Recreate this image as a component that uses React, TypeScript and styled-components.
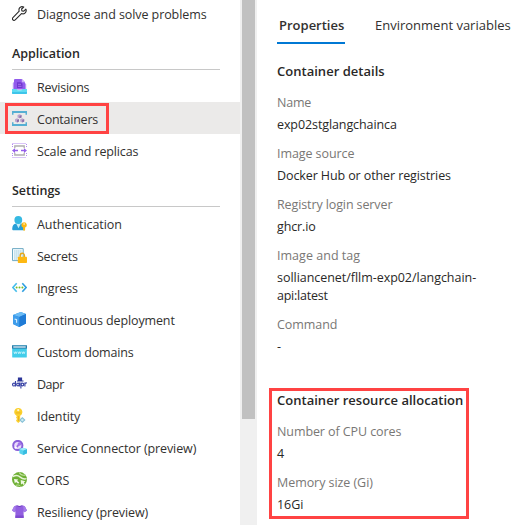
import React from "react";
import styled, { createGlobalStyle } from "styled-components";

const GlobalStyle = createGlobalStyle`
  *, *::before, *::after { box-sizing: border-box; }
  body {
    margin: 0;
    background: #fff;
    color: #323130;
    font-family: "Open Sans", "Noto Sans", sans-serif;
    font-size: 12.5px;
    overflow: hidden;
  }
`;

const Page = styled.div`
  display: flex;
  width: 524px;
  height: 525px;
  overflow: hidden;
`;

const Sidebar = styled.nav`
  flex: 0 0 240px;
  display: flex;
  flex-direction: column;
  margin-top: -3px;
`;

const GroupTitle = styled.h2<{ $track?: number }>`
  flex: none;
  height: 41px;
  margin: 0 20px 0 12px;
  padding-top: 15px;
  border-bottom: 1px solid #c8c8c8;
  font-size: 12.5px;
  line-height: 20px;
  font-weight: 600;
  color: #292827;
  letter-spacing: ${(p) => p.$track ?? 0}px;
`;

const NavItem = styled.a<{ $selected?: boolean }>`
  position: relative;
  flex: none;
  display: flex;
  align-items: center;
  gap: 10px;
  height: 32px;
  padding: 1px 0 0 12px;
  background: ${(p) => (p.$selected ? "#ebeae9" : "transparent")};

  svg {
    flex: none;
    width: 15px;
    height: 15px;
  }
`;

const Label = styled.span<{ $track: number }>`
  line-height: 18px;
  padding-top: 2px;
  white-space: nowrap;
  letter-spacing: ${(p) => p.$track}px;
`;

const NavHighlight = styled.span`
  position: absolute;
  left: 5px;
  top: 1px;
  width: 104px;
  height: 31px;
  border: 3px solid #ff4343;
`;

const ScrollTrack = styled.div`
  flex: 0 0 17px;
  padding: 0 2px;
  background: #f0f0f0;
`;

const ScrollThumb = styled.div`
  height: 419px;
  background: #c1c1c1;
`;

const Content = styled.main`
  flex: 1;
  min-width: 0;
  padding-left: 20px;
`;

const Tabs = styled.div`
  display: flex;
  gap: 28px;
  height: 44px;
`;

const Tab = styled.div<{ $active?: boolean }>`
  height: 44px;
  padding: 16px 2px 0;
  width: ${(p) => (p.$active ? "68px" : "auto")};
  border-bottom: 2px solid ${(p) => (p.$active ? "#0078d4" : "transparent")};
  font-size: 13px;
  line-height: 18px;
  font-weight: ${(p) => (p.$active ? 600 : 400)};
  letter-spacing: 0;
  white-space: nowrap;
`;

const Section = styled.section<{ $gap: number }>`
  position: relative;
  margin-top: ${(p) => p.$gap}px;
`;

const SectionTitle = styled.h3`
  margin: 0 0 12px;
  font-size: 13px;
  line-height: 22px;
  font-weight: 600;
  color: #292827;
  letter-spacing: 0.02px;
`;

const Fields = styled.dl`
  display: flex;
  flex-direction: column;
  gap: 11px;
  margin: 0;
`;

const Field = styled.div`
  display: flex;
  flex-direction: column;
  gap: 4px;
`;

const Term = styled.dt<{ $track: number }>`
  line-height: 18px;
  color: #797775;
  letter-spacing: ${(p) => p.$track}px;
`;

const Value = styled.dd`
  margin: 0;
  line-height: 18px;
  color: #292827;
`;

const Line = styled.span<{ $track: number }>`
  display: block;
  white-space: nowrap;
  letter-spacing: ${(p) => p.$track}px;
`;

const SectionHighlight = styled.span`
  position: absolute;
  left: -8px;
  top: -1px;
  width: 200px;
  height: 131px;
  border: 3px solid #ff4343;
`;

const Svg = ({ children }: { children: React.ReactNode }) => (
  <svg viewBox="0 0 15 15" fill="none">{children}</svg>
);

const Wrench = () => (
  <Svg>
    <path d="M13.9 3.1 11.8 5.2 9.9 4.9 9.6 3 11.7 1C10.2.3 8.500.7 7.600 1.900 6.900 2.900 6.800 4.100 7.200 5.200L.9 11.600C.3 12.200.3 13.300.9 13.900 1.500 14.500 2.500 14.500 3.200 13.900L9.500 7.600C10.700 8.100 12.200 7.800 13.200 6.800 14.200 5.800 14.400 4.300 13.900 3.100Z" stroke="#292929" strokeWidth="1.1" strokeLinejoin="round" />
  </Svg>
);

const RevisionsIcon = () => (
  <Svg>
    <path d="M.8 4 3 2v8H.8zM14.200 5v5h-2V3.500z" fill="#b796f5" />
    <path d="M3 0h6.800L13 3.200V10.500H3a1 1 0 0 1-1-1V1a1 1 0 0 1 1-1z" fill="#925cec" />
    <path d="M9.800 0 13 3.200H9.800z" fill="#cdb2fa" />
    <path d="M5 3.300h4l1.500 1.500V9H5z" fill="#7136d0" />
    <path d="M6 5.300h3M6 7.300h3.500" stroke="#a77af0" strokeWidth=".9" />
    <path d="M0 10h4.500l1 1.300h4l1-1.300H15v4a1 1 0 0 1-1 1H1a1 1 0 0 1-1-1z" fill="#5fdcf2" />
    <path d="M0 13h15v1a1 1 0 0 1-1 1H1a1 1 0 0 1-1-1z" fill="#3ec5ea" />
  </Svg>
);

const ContainersIcon = () => (
  <Svg>
    <path d="M0 0h15v3.800h-1.500V2H1.500v1.800H0zM0 15h15v-3.800h-1.500V13H1.500v-1.800H0z" fill="#56afd3" />
    <path d="M7.500 3.200 9.500 4.100v2.300L7.500 7.300 5.500 6.400V4.100zM5 7.300 7 8.200v2.300l-2 .9-2-.9V8.200zM10.200 7.300l2 .9v2.300l-2 .9-2-.9V8.200z" fill="#bba5cd" />
    <path d="M7.500 5 9.500 4.100v2.300L7.500 7.300zM5 9.100l2-.9v2.300l-2 .9zM10.200 9.100l2-.9v2.300l-2 .9z" fill="#8a6da9" />
  </Svg>
);

const ScaleIcon = () => (
  <Svg>
    <path d="M.5.500h14M.5 14.500h14" stroke="#b48af0" strokeDasharray="1 1" />
    <path d="M.5 1v4M14.500 1v4M.5 10v4M14.500 10v4" stroke="#b48af0" strokeDasharray="1 1" />
    <path d="M2.800 5.200V3h9.400v2.200M2.800 9.800V12h9.400V9.800" stroke="#b0aeb0" strokeWidth="1.300" />
    <path d="M0 7.500 3 5.200v1.600h3v1.500H3v1.600zM15 7.500l-3-2.300v1.600H9v1.500h3v1.600z" fill="#965fea" />
  </Svg>
);

const AuthIcon = () => (
  <Svg>
    <path d="M.2 13c0-3.500 1.500-5.600 4-5.600H9c2 0 3.200 2 3.500 5.600 0 .8-.5 1.300-1.300 1.300H1.500C.7 14.300.2 13.800.2 13z" fill="#279fd7" />
    <path d="M4 7.300h5l-2.500 4.900z" fill="#c5effb" />
    <circle cx="6.300" cy="4" r="3.900" fill="#36b9e2" />
    <path d="M12.100 6.300a2.700 2.700 0 0 1 1 5.200V14l-1 1-1-1v-2.500a2.700 2.700 0 0 1 1-5.200z" fill="#fdb813" />
    <circle cx="12.100" cy="8" r=".7" fill="#fff" />
  </Svg>
);

const SecretsIcon = () => (
  <Svg>
    <path d="M.5.600h10.700v12H.5z" fill="#f4fbfe" stroke="#6fabc4" />
    <path d="M2.200 3h8M2.200 5h8M2.200 7h8M2.200 9h5M2.200 11h3" stroke="#8dc0d6" strokeDasharray="1.300 .7" />
    <path d="M8.200 9V7.500a2.100 2.300 0 0 1 4.200 0V9" stroke="#e9a716" strokeWidth="1.400" />
    <rect x="5.800" y="8.700" width="9.200" height="6.300" rx=".8" fill="#fdb813" />
  </Svg>
);

const IngressIcon = () => (
  <Svg>
    <path d="M4.700 3.300.9 7.500l3.800 4.200" stroke="#45bdea" strokeWidth="1.600" />
    <path d="M10.300 3.300l3.800 4.200-3.800 4.200" stroke="#2e9fe0" strokeWidth="1.600" />
    <circle cx="4.600" cy="7.500" r="1" fill="#78bd27" />
    <circle cx="7.500" cy="7.500" r="1" fill="#78bd27" />
    <circle cx="10.400" cy="7.500" r="1" fill="#78bd27" />
  </Svg>
);

const DeployIcon = () => (
  <Svg>
    <path d="M8.800 0 14 2v9.600L7.200 15 1 12V3z" fill="#2289e3" />
    <path d="M1 3 8.800 0 14 2 7.200 5z" fill="#6cbcf5" />
    <path d="M7.200 5 14 2v9.600L7.200 15z" fill="#1f7bd6" />
    <path d="M1 3l6.200 2v10L1 12z" fill="#3f9deb" />
    <path d="M2.600 7 4.600 7.700v3" stroke="#d9f0ff" strokeWidth="1.100" />
  </Svg>
);

const DomainsIcon = () => (
  <Svg>
    <rect x=".2" y="1.500" width="14.600" height="12" rx=".6" fill="#42cdea" />
    <path d="M0 1.300h15v3.300H0z" fill="#2a7ba9" />
    <path d="M1.300 2.400h12.400v1.200H1.300z" fill="#eaf8fd" />
    <path d="m1.900 7.700.7 2 .8-2 .8 2 .7-2m1 0 .7 2 .8-2 .8 2 .7-2m1 0 .7 2 .8-2 .8 2 .7-2" stroke="#dffaff" strokeWidth=".7" />
  </Svg>
);

const DaprIcon = () => (
  <Svg>
    <path d="M5.900 1.500h4.200v3.300H5.900zM5 4.500h6.500v1.100H5z" fill="#2b3598" />
    <g stroke="#3a44a6" strokeWidth="1.150">
      <circle cx="2" cy="8.500" r="1.450" />
      <path d="M3.500 5v5.500" />
      <circle cx="6" cy="8.500" r="1.350" />
      <path d="M7.400 6.500v4M8.900 6.500v6" />
      <circle cx="10.400" cy="8.500" r="1.350" />
      <path d="M12.900 10.500V6.600M12.900 7.900c.3-.8 1-1.100 2-.9" />
    </g>
  </Svg>
);

const IdentityIcon = () => (
  <Svg>
    <path d="M6.200 0a4.100 4.100 0 0 1 2 7.700v5.500l-2 1.800-2-2v-1.100l1-1-1-1V9l.8-.8-.8-.6A4.100 4.100 0 0 1 6.200 0z" fill="#fbd02d" />
    <circle cx="6.200" cy="2.200" r="1.100" fill="#fff6ce" />
    <path d="M3.900 4.900h4.600M6.500 8v5" stroke="#eaae22" strokeWidth=".9" />
    <path d="m10.300 8.900 3.200 3.100-3.200 3-3.200-3z" fill="#84bfd6" />
    <path d="m10.300 10.400 1.700 1.600-1.700 1.500L8.600 12z" fill="#c9e9f1" />
  </Svg>
);

const ConnectorIcon = () => (
  <Svg>
    <circle cx="5.800" cy="5.500" r="4.600" fill="#e9dcfb" stroke="#8a60da" strokeWidth="2" />
    <path d="M4.300 7.300 7.300 4.200" stroke="#9c6ce6" strokeWidth="1.800" />
    <circle cx="7.400" cy="4" r="1.800" fill="#a374ea" />
    <circle cx="3.700" cy="7.500" r="1.200" fill="#fff" />
    <path d="m11.200 7.700 3.800 1.400v4.200L11.200 15l-3.800-1.700V9.100z" fill="#58d3ee" />
    <path d="m11.200 10.500 3.800-1.400v4.200L11.200 15z" fill="#38bce0" />
    <path d="m7.400 9.100 3.800-1.400L15 9.100l-3.800 1.400z" fill="#9debf8" />
  </Svg>
);

const CorsIcon = () => (
  <Svg>
    <circle cx="7.500" cy="7.500" r="7.500" fill="#6fb035" />
    <path d="M1 4.700c2.500-1.700 5.200-1.300 7.200.4 1.900 1.600 3.800 2.300 6.300 1.600" stroke="#e6f4d6" strokeWidth="1.400" />
    <path d="M7.300.600c1 2 3.200 3 5.700 2.500" stroke="#c3e2a2" strokeWidth="1.100" />
    <path d="m2 7 4.200.5-1 1.300 2 1.700-1 1.200-2.100-1.700-1.300 1.200z" fill="#f4faec" />
    <path d="m8.700 8 4.600 1.300-1.400 1.300 1 1.700-1.400.8-1-1.700-1.500 1z" fill="#eef8e2" />
    <path d="M4 13.300c1.700-.6 3.300-.3 4.500.9" stroke="#c3e2a2" />
  </Svg>
);

const ResiliencyIcon = () => (
  <Svg>
    <path d="M4.700 1.300c1.500 1 4.100 1 5.600 0l2.500 1L15 6.500l-2.500 1.700-.9-.9V14H3.400V7.300l-.9.900L0 6.500l2.200-4.200z" fill="#925fe0" />
    <path d="m2.200 2.300 1.500-.6-.3 5.600-.9.900L0 6.500zM12.800 2.300l-1.500-.6.300 5.600.9.900L15 6.500z" fill="#a67dea" />
    <path d="M4.700 1.300c1.500 1 4.100 1 5.600 0-.7 2-4.600 2.400-5.600 0z" fill="#6c3cbd" />
    <path d="M3.400 11.500h8.200V14H3.400z" fill="#7f4bd0" />
  </Svg>
);

type Entry = { text: string; track: number; Icon: React.FC; selected?: boolean };

const application: Entry[] = [
  { text: "Revisions", track: -0.23, Icon: RevisionsIcon },
  { text: "Containers", track: -0.24, Icon: ContainersIcon, selected: true },
  { text: "Scale and replicas", track: -0.13, Icon: ScaleIcon },
];

const settings: Entry[] = [
  { text: "Authentication", track: -0.06, Icon: AuthIcon },
  { text: "Secrets", track: -0.25, Icon: SecretsIcon },
  { text: "Ingress", track: -0.18, Icon: IngressIcon },
  { text: "Continuous deployment", track: -0.125, Icon: DeployIcon },
  { text: "Custom domains", track: -0.15, Icon: DomainsIcon },
  { text: "Dapr", track: -0.5, Icon: DaprIcon },
  { text: "Identity", track: -0.11, Icon: IdentityIcon },
  { text: "Service Connector (preview)", track: -0.1, Icon: ConnectorIcon },
  { text: "CORS", track: 0.05, Icon: CorsIcon },
  { text: "Resiliency (preview)", track: -0.13, Icon: ResiliencyIcon },
];

type Detail = { term: string; termTrack: number; lines: [string, number][] };

const details: Detail[] = [
  { term: "Name", termTrack: -0.2, lines: [["exp02stglangchainca", -0.095]] },
  { term: "Image source", termTrack: -0.08, lines: [["Docker Hub or other registries", -0.1]] },
  { term: "Registry login server", termTrack: -0.11, lines: [["ghcr.io", -0.12]] },
  { term: "Image and tag", termTrack: 0.03, lines: [["solliancenet/fllm-exp02/langchain-", -0.04], ["api:latest", -0.24]] },
  { term: "Command", termTrack: -0.07, lines: [["-", 0]] },
];

const resources: Detail[] = [
  { term: "Number of CPU cores", termTrack: -0.09, lines: [["4", 0]] },
  { term: "Memory size (Gi)", termTrack: -0.06, lines: [["16Gi", -0.08]] },
];

const NavEntry = ({ text, track, Icon, selected }: Entry) => (
  <NavItem $selected={selected}>
    <Icon />
    <Label $track={track}>{text}</Label>
    {selected && <NavHighlight />}
  </NavItem>
);

const FieldList = ({ items }: { items: Detail[] }) => (
  <Fields>
    {items.map((d) => (
      <Field key={d.term}>
        <Term $track={d.termTrack}>{d.term}</Term>
        <Value>
          {d.lines.map(([text, track]) => (
            <Line key={text} $track={track}>{text}</Line>
          ))}
        </Value>
      </Field>
    ))}
  </Fields>
);

export default function App() {
  return (
    <>
      <GlobalStyle />
      <Page>
        <Sidebar>
          <NavEntry text="Diagnose and solve problems" track={-0.076} Icon={Wrench} />
          <GroupTitle $track={-0.04}>Application</GroupTitle>
          {application.map((e) => <NavEntry key={e.text} {...e} />)}
          <GroupTitle>Settings</GroupTitle>
          {settings.map((e) => <NavEntry key={e.text} {...e} />)}
        </Sidebar>
        <ScrollTrack>
          <ScrollThumb />
        </ScrollTrack>
        <Content>
          <Tabs>
            <Tab $active>Properties</Tab>
            <Tab>Environment variables</Tab>
          </Tabs>
          <Section $gap={16}>
            <SectionTitle>Container details</SectionTitle>
            <FieldList items={details} />
          </Section>
          <Section $gap={33}>
            <SectionTitle>Container resource allocation</SectionTitle>
            <FieldList items={resources} />
            <SectionHighlight />
          </Section>
        </Content>
      </Page>
    </>
  );
}
